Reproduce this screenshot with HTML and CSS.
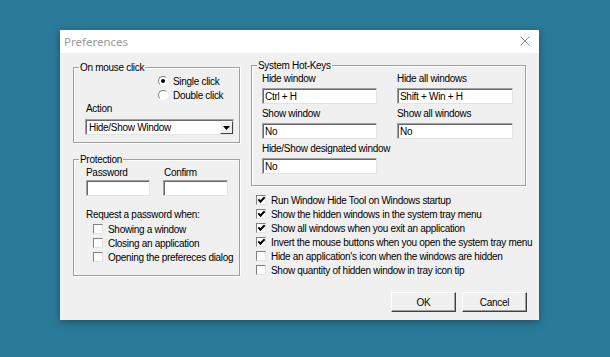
FILE: index.html
```html
<!DOCTYPE html>
<html lang="en">
<head>
  <meta charset="UTF-8">
  <title>Preferences</title>
  <link rel="stylesheet" href="styles.css">
</head>
<body>
  <div class="dialog">
    <div class="titlebar">
      <span class="title">Preferences</span>
      <svg class="close" width="10" height="10" viewBox="0 0 10 10">
        <path d="M0.5 0.5 L9.5 9.5 M9.5 0.5 L0.5 9.5" stroke="#8a8a8a" stroke-width="1" fill="none"/>
      </svg>
    </div>

    <div class="content">
      <div class="columns">
        <div class="col-left">
          <fieldset class="group group-mouse">
            <legend>On mouse click</legend>
            <div class="radios">
              <div class="radio"><span class="radio-dot checked"></span>Single click</div>
              <div class="radio"><span class="radio-dot"></span>Double click</div>
            </div>
            <div class="label action-label">Action</div>
            <div class="select">
              <span class="select-text">Hide/Show Window</span>
              <span class="select-btn">
                <svg width="7" height="4" viewBox="0 0 7 4"><path d="M0 0 H7 L3.5 4 Z" fill="#000"/></svg>
              </span>
            </div>
          </fieldset>

          <fieldset class="group group-protect">
            <legend>Protection</legend>
            <div class="pass-grid">
              <div class="label">Password</div>
              <div class="label">Confirm</div>
              <div class="textbox"></div>
              <div class="textbox"></div>
            </div>
            <div class="label request">Request a password when:</div>
            <div class="checks">
              <div class="check"><span class="box"></span>Showing a window</div>
              <div class="check"><span class="box"></span>Closing an application</div>
              <div class="check"><span class="box"></span>Opening the prefereces dialog</div>
            </div>
          </fieldset>
        </div>

        <div class="col-right">
          <fieldset class="group group-keys">
            <legend>System Hot-Keys</legend>
            <div class="keys-grid">
              <div class="key">
                <div class="label">Hide window</div>
                <div class="textbox">Ctrl + H</div>
              </div>
              <div class="key">
                <div class="label">Hide all windows</div>
                <div class="textbox">Shift + Win + H</div>
              </div>
              <div class="key">
                <div class="label">Show window</div>
                <div class="textbox">No</div>
              </div>
              <div class="key">
                <div class="label">Show all windows</div>
                <div class="textbox">No</div>
              </div>
              <div class="key">
                <div class="label">Hide/Show designated window</div>
                <div class="textbox">No</div>
              </div>
            </div>
          </fieldset>

          <div class="options">
            <div class="check"><span class="box checked"></span>Run Window Hide Tool on Windows startup</div>
            <div class="check"><span class="box checked"></span>Show the hidden windows in the system tray menu</div>
            <div class="check"><span class="box checked"></span>Show all windows when you exit an application</div>
            <div class="check"><span class="box checked"></span>Invert the mouse buttons when you open the system tray menu</div>
            <div class="check"><span class="box"></span>Hide an application's icon when the windows are hidden</div>
            <div class="check"><span class="box"></span>Show quantity of hidden window in tray icon tip</div>
          </div>
        </div>
      </div>

      <div class="buttons">
        <button class="btn">OK</button>
        <button class="btn">Cancel</button>
      </div>
    </div>
  </div>
</body>
</html>
```

FILE: styles.css
```css
body {
  margin: 0;
  padding: 30px 0 0 60px;
  height: 357px;
  box-sizing: border-box;
  background-color: #2b7a99;
  font-family: 'Liberation Sans', Arial, sans-serif;
  font-size: 10px;
  letter-spacing: -0.3px;
  color: #000;
  overflow: hidden;
}

.dialog {
  width: 479px;
  height: 290px;
  background-color: #f0f0f0;
  box-shadow: 0 2px 8px rgba(0, 0, 0, 0.35);
  display: flex;
  flex-direction: column;
}

.titlebar {
  height: 23px;
  background-color: #fff;
  display: flex;
  align-items: center;
  justify-content: space-between;
  padding: 0 9px 0 4px;
}

.titlebar .title {
  font-family: 'Noto Sans', sans-serif;
  font-size: 11.5px;
  letter-spacing: 0;
  color: #9a9a9a;
  margin-top: -1px;
}

.titlebar .close {
  margin-top: -1px;
}

.content {
  flex: 1;
  padding: 6px 12px 0 13px;
}

.columns {
  display: flex;
  gap: 11px;
}

.col-left {
  width: 167px;
  padding-top: 2px;
  display: flex;
  flex-direction: column;
  gap: 10px;
}

.col-right {
  width: 275px;
}

/* group boxes */
.group {
  margin: 0;
  padding: 0;
  min-width: 0;
  border: 1px solid #a0a0a0;
  box-shadow: inset 1px 1px 0 #fff, 1px 1px 0 #fff;
}

.group legend {
  margin-left: 5px;
  padding: 0 1px;
  line-height: 13px;
}

.label {
  line-height: 13px;
  white-space: nowrap;
}

.textbox {
  height: 16px;
  box-sizing: border-box;
  background-color: #fff;
  border-top: 1px solid #a0a0a0;
  border-left: 1px solid #a0a0a0;
  border-right: 1px solid #e3e3e3;
  border-bottom: 1px solid #e3e3e3;
  box-shadow: inset 1px 1px 0 #696969;
  padding: 1px 0 0 2px;
  line-height: 13px;
  white-space: nowrap;
}

/* on mouse click */
.group-mouse {
  height: 82px;
  box-sizing: border-box;
}

.radios {
  padding-left: 84px;
}

.radio {
  display: flex;
  align-items: center;
  height: 14px;
}

.radio-dot {
  width: 10px;
  height: 10px;
  box-sizing: border-box;
  border-radius: 50%;
  background-color: #fff;
  border: 1px solid;
  border-color: #808080 #fff #fff #808080;
  margin-right: 5px;
  display: flex;
  align-items: center;
  justify-content: center;
}

.radio-dot.checked::after {
  content: '';
  width: 4px;
  height: 4px;
  border-radius: 50%;
  background-color: #000;
}

.action-label {
  padding-left: 12px;
}

.select {
  margin: 4px 0 0 11px;
  width: 149px;
  height: 16px;
  box-sizing: border-box;
  background-color: #fff;
  border-top: 1px solid #a0a0a0;
  border-left: 1px solid #a0a0a0;
  border-right: 1px solid #e3e3e3;
  border-bottom: 1px solid #e3e3e3;
  box-shadow: inset 1px 1px 0 #696969;
  display: flex;
  align-items: center;
  justify-content: space-between;
}

.select-text {
  padding-left: 3px;
}

.select-btn {
  width: 13px;
  height: 13px;
  box-sizing: border-box;
  background-color: #f0f0f0;
  border: 1px solid;
  border-color: #fff #404040 #404040 #fff;
  display: flex;
  align-items: center;
  justify-content: center;
  margin-top: 1px;
}

/* protection */
.group-protect {
  height: 123px;
  box-sizing: border-box;
}

.pass-grid {
  display: grid;
  grid-template-columns: 64px 65px;
  column-gap: 13px;
  row-gap: 1px;
  padding-left: 12px;
}

.pass-grid .label:nth-child(2) {
  padding-left: 1px;
}

.request {
  margin-top: 12px;
  padding-left: 12px;
}

.checks {
  padding-left: 19px;
  margin-top: 1px;
}

.check {
  display: flex;
  align-items: center;
  height: 14px;
  white-space: nowrap;
}

.box {
  width: 10px;
  height: 10px;
  box-sizing: border-box;
  background-color: #fff;
  border: 1px solid;
  border-color: #808080 #e3e3e3 #e3e3e3 #808080;
  margin-right: 5px;
  flex-shrink: 0;
  display: flex;
  align-items: center;
  justify-content: center;
}

.box.checked::after {
  content: '';
  width: 5px;
  height: 2px;
  border-left: 2px solid #000;
  border-bottom: 2px solid #000;
  transform: rotate(-45deg);
  margin-top: -2px;
}

/* hot keys */
.group-keys {
  height: 127px;
  box-sizing: border-box;
}

.keys-grid {
  display: grid;
  grid-template-columns: 115px 116px;
  column-gap: 20px;
  row-gap: 3px;
  padding: 0 0 0 10px;
}

.key .textbox {
  margin-top: 3px;
}

.options {
  margin-top: 7px;
  padding-left: 5px;
}

/* buttons */
.buttons {
  display: flex;
  justify-content: flex-end;
  gap: 6px;
  margin-top: 15px;
}

.btn {
  width: 65px;
  height: 20px;
  padding: 0;
  font-family: 'Liberation Sans', Arial, sans-serif;
  font-size: 10px;
  letter-spacing: -0.3px;
  color: #000;
  background-color: #f0f0f0;
  border: 1px solid;
  border-color: #fff #404040 #404040 #fff;
  box-shadow: inset -1px -1px 0 #a0a0a0;
}
```
